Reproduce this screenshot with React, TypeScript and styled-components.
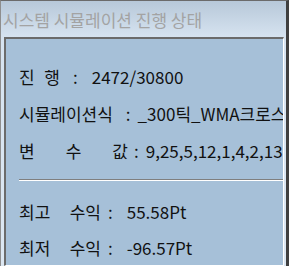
import styled, { createGlobalStyle } from "styled-components";

const GlobalStyle = createGlobalStyle`
  html, body {
    margin: 0;
    padding: 0;
    background: #d9e5f0;
  }
`;

const Window = styled.div`
  width: 289px;
  height: 266px;
  box-sizing: border-box;
  display: flex;
  flex-direction: column;
  border-top: 1px solid #6b6b6b;
  border-left: 1px solid #8e8e8e;
  border-right: 3px solid #3f3f3f;
  background: linear-gradient(#b7c8d9 0px, #d6e3f0 36px, #dce7f2 100%);
  font-family: "Noto Sans CJK KR", sans-serif;
`;

const TitleBar = styled.div`
  height: 36px;
  flex-shrink: 0;
  display: flex;
  align-items: center;
  padding-left: 2px;
  font-size: 17px;
  color: #a3a3a3;
`;

const Panel = styled.div`
  flex: 1;
  margin: 0 2px 4px 3px;
  padding: 19px 0 0 13px;
  background: #a6c0d8;
  border-top: 2px solid #6b6b6b;
  border-left: 2px solid #6b6b6b;
  border-right: 1px solid #ffffff;
  border-bottom: 1px solid #ffffff;
  display: flex;
  flex-direction: column;
  color: #111;
  font-size: 17px;
`;

const Row = styled.div<{ $height: number }>`
  height: ${({ $height }) => $height}px;
  flex-shrink: 0;
  display: flex;
  align-items: center;
  white-space: nowrap;
  overflow: hidden;
`;

const Label = styled.div<{ $width?: number }>`
  display: flex;
  justify-content: space-between;
  width: ${({ $width }) => ($width ? `${$width}px` : "auto")};
  flex-shrink: 0;
`;

const Colon = styled.span<{ $gap: number }>`
  margin-left: ${({ $gap }) => $gap}px;
`;

const Value = styled.span<{ $gap: number }>`
  margin-left: ${({ $gap }) => $gap}px;
`;

const Separator = styled.div`
  margin: 10px 0 12px 0;
  height: 1px;
  flex-shrink: 0;
  background: #7f7f7f;
  border-bottom: 1px solid #ffffff;
`;

type RowData = {
  parts: string[];
  width?: number;
  colonGap: number;
  valueGap: number;
  value: string;
};

const TOP_ROWS: RowData[] = [
  { parts: ["진", "행"], width: 41, colonGap: 13, valueGap: 14, value: "2472/30800" },
  { parts: ["시뮬레이션식"], colonGap: 13, valueGap: 7, value: "_300틱_WMA크로스" },
  { parts: ["변", "수", "값"], width: 109, colonGap: 6, valueGap: 7, value: "9,25,5,12,1,4,2,13" },
];

const BOTTOM_ROWS: RowData[] = [
  { parts: ["최고", "수익"], width: 82, colonGap: 7, valueGap: 14, value: "55.58Pt" },
  { parts: ["최저", "수익"], width: 82, colonGap: 7, valueGap: 14, value: "-96.57Pt" },
];

function InfoRow({ row, height }: { row: RowData; height: number }) {
  return (
    <Row $height={height}>
      <Label $width={row.width}>
        {row.parts.map(part => (
          <span key={part}>{part}</span>
        ))}
      </Label>
      <Colon $gap={row.colonGap}>:</Colon>
      <Value $gap={row.valueGap}>{row.value}</Value>
    </Row>
  );
}

export default function App(): JSX.Element {
  return (
    <>
      <GlobalStyle />
      <Window>
        <TitleBar>시스템 시뮬레이션 진행 상태</TitleBar>
        <Panel>
          {TOP_ROWS.map(row => (
            <InfoRow height={37} key={row.value} row={row} />
          ))}
          <Separator />
          {BOTTOM_ROWS.map(row => (
            <InfoRow height={36} key={row.value} row={row} />
          ))}
        </Panel>
      </Window>
    </>
  );
}
